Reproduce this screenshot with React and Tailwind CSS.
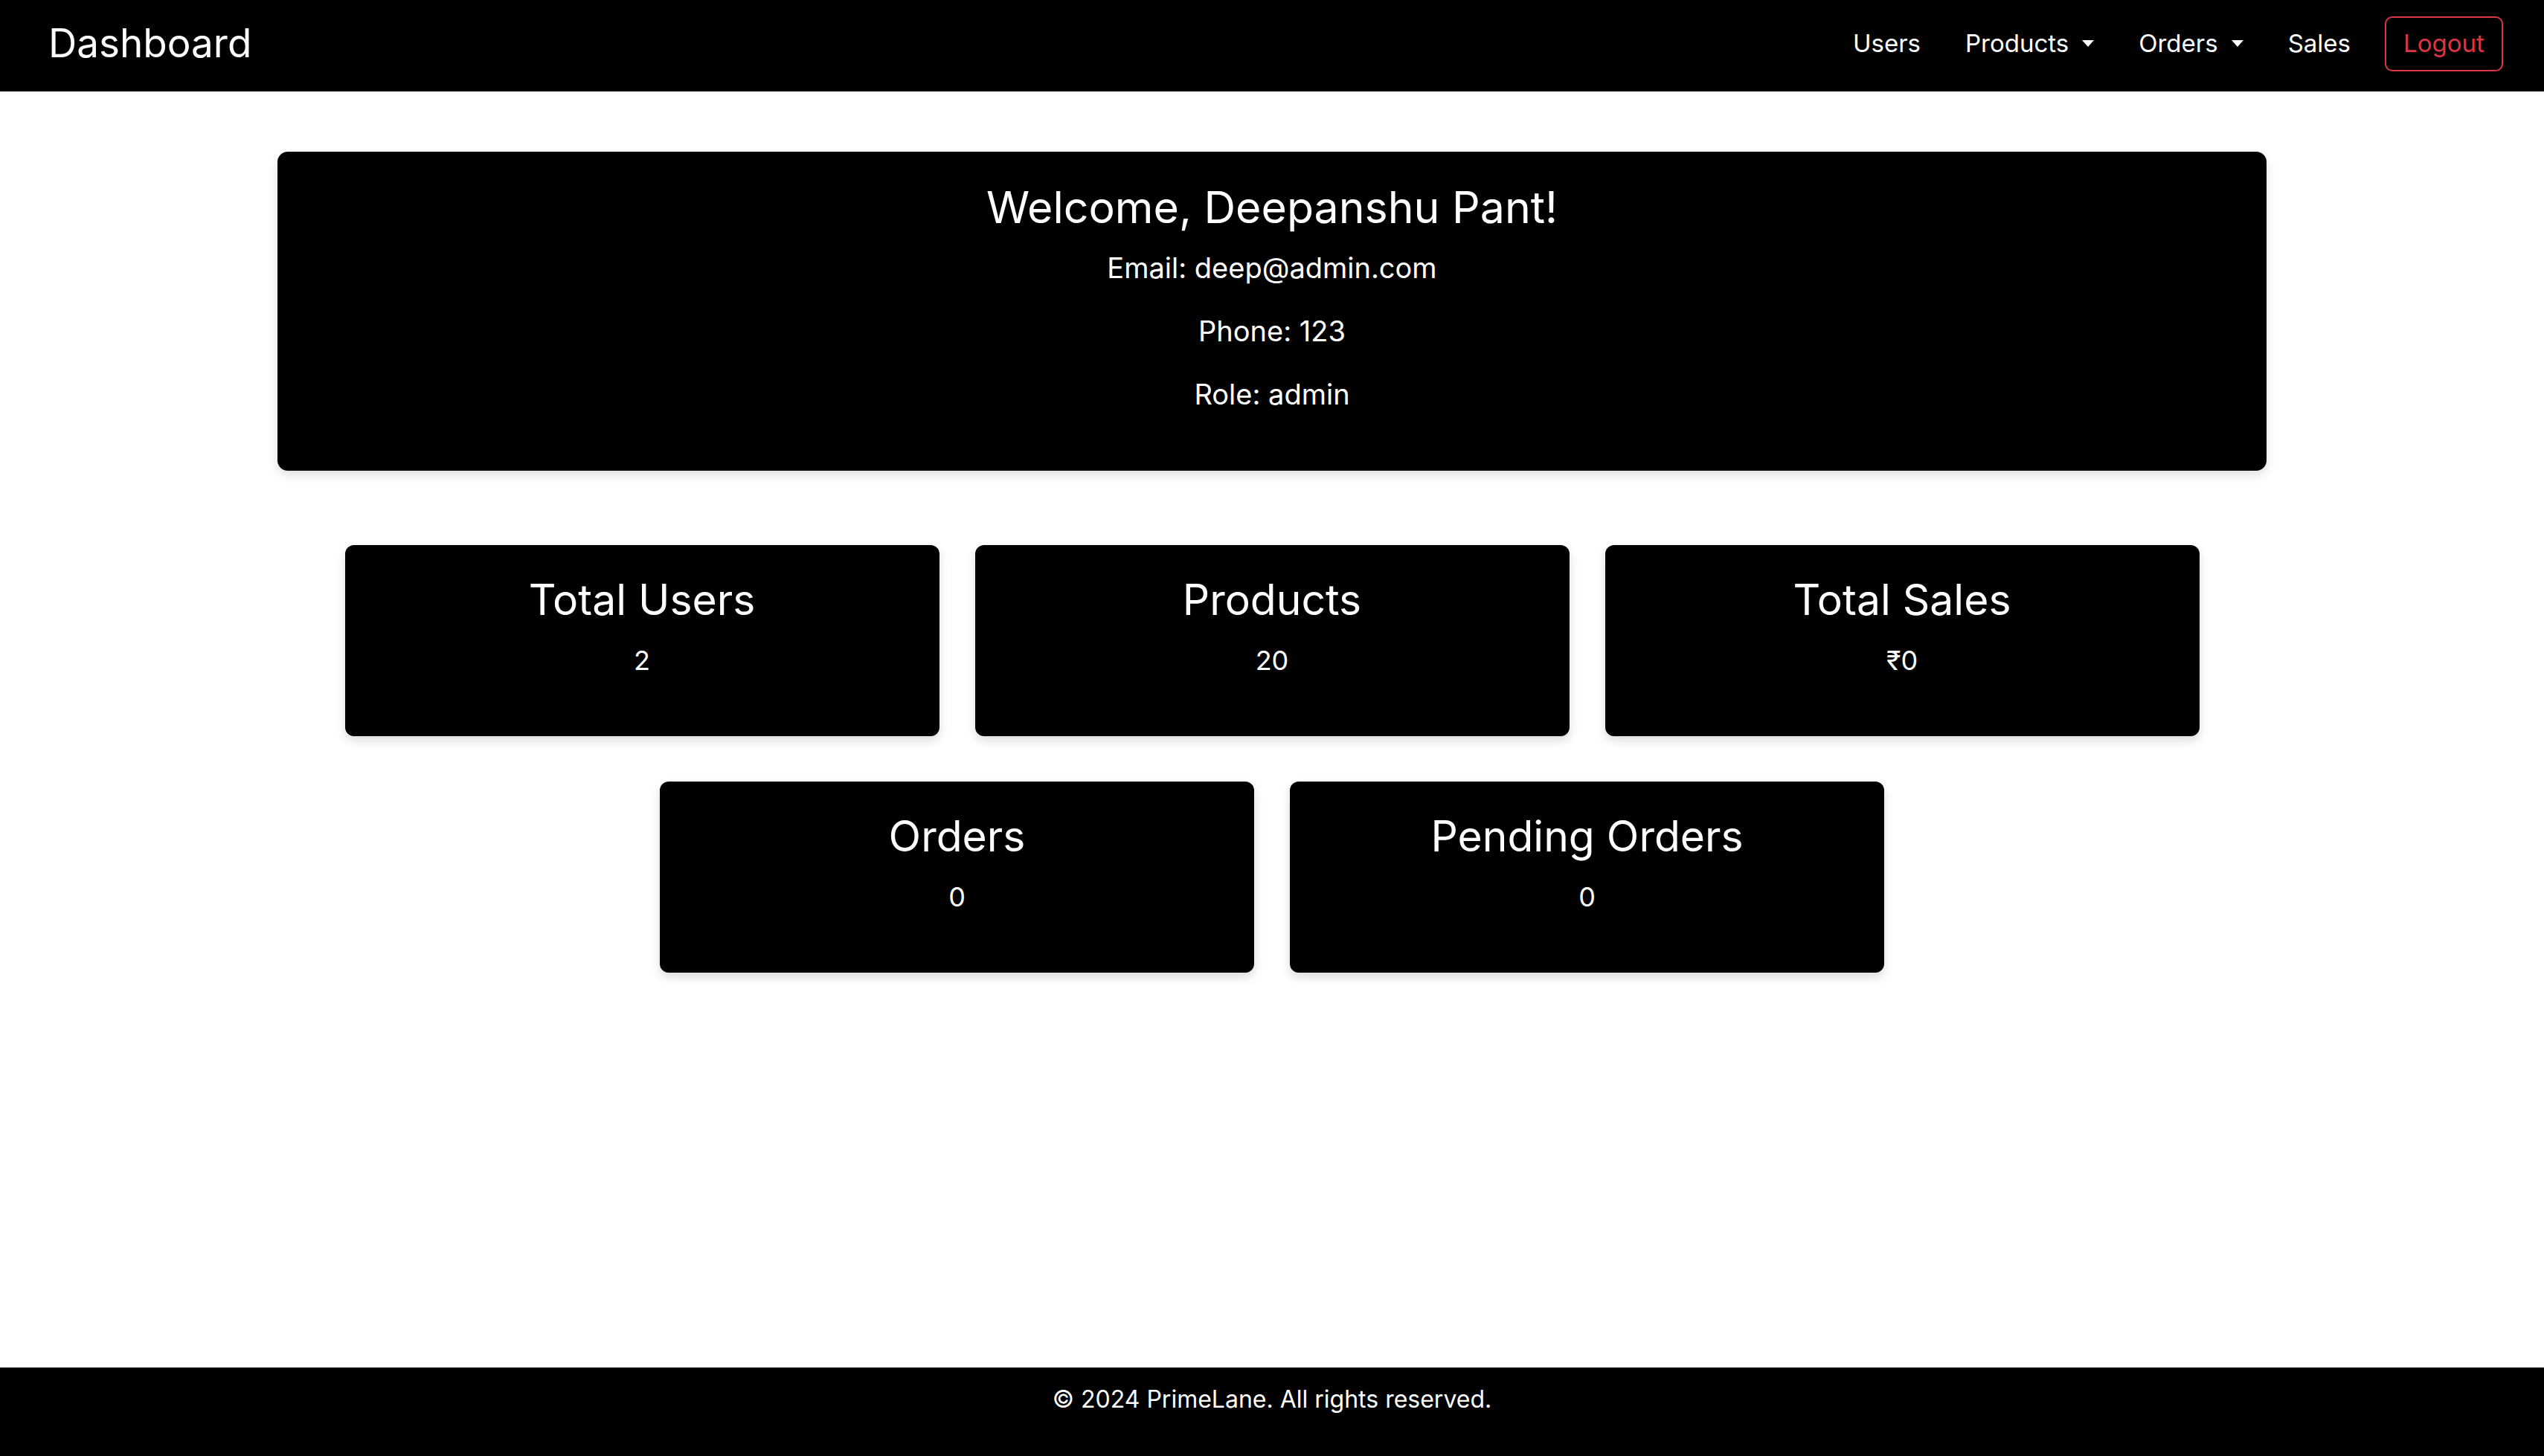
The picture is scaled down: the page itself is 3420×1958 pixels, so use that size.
export default function App() {
  const stats = [
    { title: "Total Users", value: "2" },
    { title: "Products", value: "20" },
    { title: "Total Sales", value: "₹0" },
    { title: "Orders", value: "0" },
    { title: "Pending Orders", value: "0" },
  ];

  return (
    <div className="min-h-screen flex flex-col bg-white font-['Inter',sans-serif]">
      {/* navbar */}
      <nav className="h-[123px] bg-black flex items-center justify-between pl-[65px] pr-[55px] pb-[6px]">
        <span className="text-white text-[53px] leading-none">Dashboard</span>
        <div className="flex items-center">
          <ul className="flex items-center gap-[60px] text-white text-[33px]">
            <li>Users</li>
            <li className="flex items-center">
              Products
              <span className="ml-[18px] w-0 h-0 border-x-[8px] border-x-transparent border-t-[9px] border-t-white" />
            </li>
            <li className="flex items-center">
              Orders
              <span className="ml-[18px] w-0 h-0 border-x-[8px] border-x-transparent border-t-[9px] border-t-white" />
            </li>
            <li>Sales</li>
          </ul>
          <button className="ml-[46px] w-[159px] h-[74px] border-2 border-[#dc3545] rounded-[10px] text-[#dc3545] text-[33px]">
            Logout
          </button>
        </div>
      </nav>

      <main className="flex-1 pt-[81px]">
        <div className="w-[2674px] mx-auto bg-black rounded-[14px] text-white text-center pt-[39px] pb-[81px] shadow-[0_6px_14px_rgba(0,0,0,0.12)]">
          <h2 className="text-[59px] leading-[72px]">Welcome, Deepanshu Pant!</h2>
          <p className="mt-[23px] text-[38px] leading-[44px]">Email: deep@admin.com</p>
          <p className="mt-[41px] text-[38px] leading-[44px]">Phone: 123</p>
          <p className="mt-[41px] text-[38px] leading-[44px]">Role: admin</p>
        </div>

        <div className="w-[2494px] mx-auto mt-[100px] flex flex-wrap justify-center gap-x-[48px] gap-y-[61px]">
          {stats.map((s) => (
            <div
              key={s.title}
              className="w-[799px] h-[257px] bg-black rounded-[12px] text-white text-center pt-[38px] shadow-[0_6px_14px_rgba(0,0,0,0.14)]"
            >
              <h3 className="text-[57px] leading-[72px]">{s.title}</h3>
              <p className="mt-[23px] text-[36px] leading-[44px]">{s.value}</p>
            </div>
          ))}
        </div>
      </main>

      <footer className="h-[119px] bg-black text-white text-center pt-[23px] text-[32px] leading-[40px]">
        © 2024 PrimeLane. All rights reserved.
      </footer>
    </div>
  );
}
